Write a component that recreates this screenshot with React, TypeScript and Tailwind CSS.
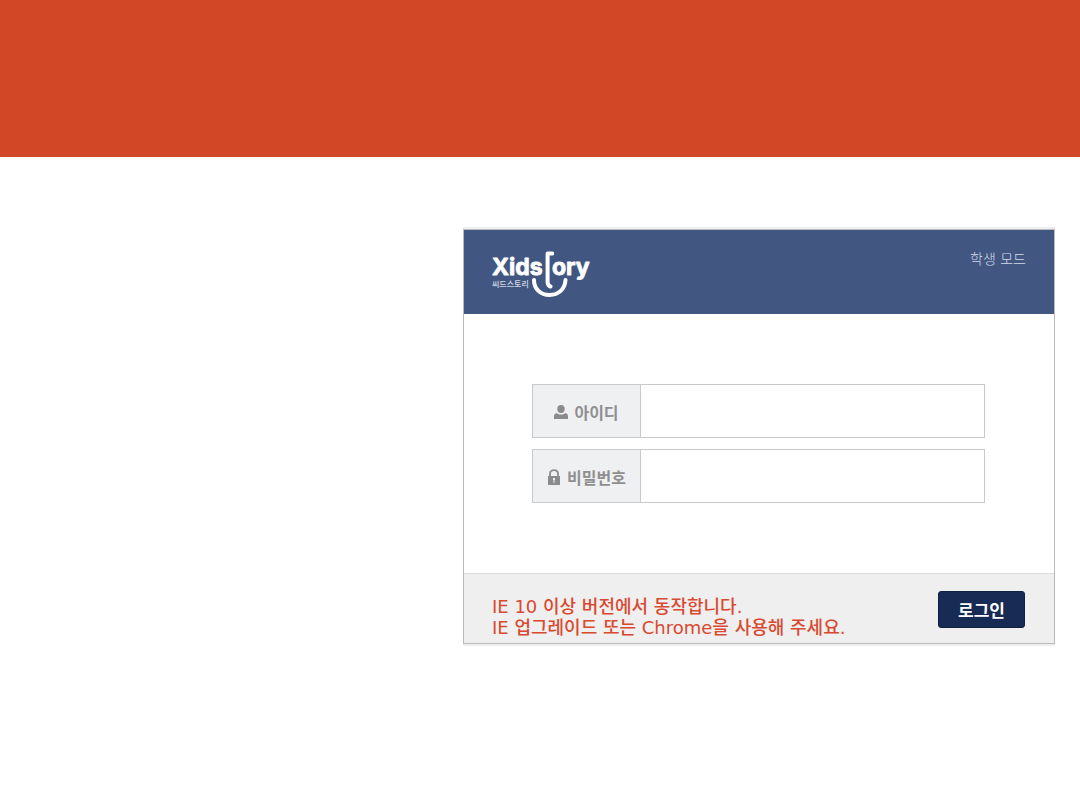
import type { ReactNode } from "react";

function Logo() {
  return (
    <svg width="104" height="52" viewBox="0 0 104 52" role="img" aria-label="Xidstory 씨드스토리">
      <g
        fill="#ffffff"
        stroke="#ffffff"
        strokeWidth="0.8"
        strokeLinejoin="round"
        className="font-['Inter'] text-[23px] font-bold"
      >
        <text x="2" y="27">Xids</text>
        <text x="62" y="27">ory</text>
      </g>
      <text x="2" y="39" fill="#d3d9e6" className="font-['Noto_Sans_CJK_KR',sans-serif] text-[8px] font-medium">
        씨드스토리
      </text>
      <g fill="none" stroke="#ffffff" strokeLinecap="round" strokeLinejoin="round">
        <path d="M62.2 5.600H57.600V34Q57.600 37.500 60.500 38.500" strokeWidth="4" />
        <path d="M44 32C44 41 50.500 47 59.500 47C68.500 47 75 41 75.500 32" strokeWidth="4" />
      </g>
    </svg>
  );
}

function UserIcon() {
  return (
    <svg width="14" height="14" viewBox="0 0 14 14" fill="#8b8b8c" aria-hidden="true">
      <ellipse cx="7" cy="4" rx="3.700" ry="4" />
      <path d="M0 14V10.500Q0 8.500 2.800 8C4.500 10 9.500 10 11.200 8Q14 8.500 14 10.500V14Z" />
    </svg>
  );
}

function LockIcon() {
  return (
    <svg width="14" height="16" viewBox="0 0 14 16" aria-hidden="true">
      <path d="M3 8V4.800C3 -0.200 11 -0.200 11 4.800V8" fill="none" stroke="#8b8b8c" strokeWidth="1.800" />
      <rect x="1" y="7" width="12" height="9" fill="#8b8b8c" />
      <path d="M6 9H8V11H7.500V14H6.500V11H6Z" fill="#eff0f2" />
    </svg>
  );
}

type FieldProps = { id: string; type: string; label: string; icon: ReactNode };

function Field({ id, type, label, icon }: FieldProps) {
  return (
    <div className="flex h-[54px] border border-[#c9c9c9] bg-white">
      <label
        htmlFor={id}
        className="flex w-[108px] shrink-0 items-center justify-center gap-1.5 border-r border-[#c9c9c9] bg-[#eff0f2] pt-px text-[16px] font-bold text-[#8f8f90]"
      >
        {icon}
        {label}
      </label>
      <input id={id} type={type} className="min-w-0 flex-1 bg-transparent px-3 text-[16px] outline-none" />
    </div>
  );
}

export default function App() {
  return (
    <div className="min-h-screen bg-white font-['Noto_Sans_CJK_KR',sans-serif]">
      <div className="h-[157px] bg-[#d24726]" />
      <main className="flex justify-end pt-[70px] pr-[25px]">
        <div className="w-full max-w-[592px] border-y-2 border-[#eeeeee]">
          <form className="border border-[#b9bbbd]" onSubmit={(event) => event.preventDefault()}>
            <header className="flex h-[84px] items-start justify-between bg-[#415782] pt-[18px] pr-7 pl-[26px]">
              <Logo />
              <a
                href="#student"
                className="font-['DejaVu_Sans','Noto_Sans_CJK_KR',sans-serif] text-[14px] leading-[22px] font-light text-[#d3d9e6]"
              >
                학생 모드
              </a>
            </header>
            <div className="flex flex-col gap-[11px] py-[70px] pr-[69px] pl-[68px]">
              <Field id="user-id" type="text" label="아이디" icon={<UserIcon />} />
              <Field id="password" type="password" label="비밀번호" icon={<LockIcon />} />
            </div>
            <footer className="flex h-[70px] items-start justify-between border-t border-[#dcdcdc] bg-[#efefef] pt-[17px] pr-[29px] pl-7">
              <p className="pt-[5px] font-['DejaVu_Sans','Noto_Sans_CJK_KR',sans-serif] text-[18px] leading-[21px] font-medium text-[#d9492f]">
                IE 10 이상 버전에서 동작합니다.
                <br />
                IE 업그레이드 또는 Chrome을 사용해 주세요.
              </p>
              <button
                type="submit"
                className="h-[37px] w-[87px] rounded-[3px] border border-[#122142] bg-[#172b54] pt-px text-[17px] leading-5 font-bold text-white"
              >
                로그인
              </button>
            </footer>
          </form>
        </div>
      </main>
    </div>
  );
}
